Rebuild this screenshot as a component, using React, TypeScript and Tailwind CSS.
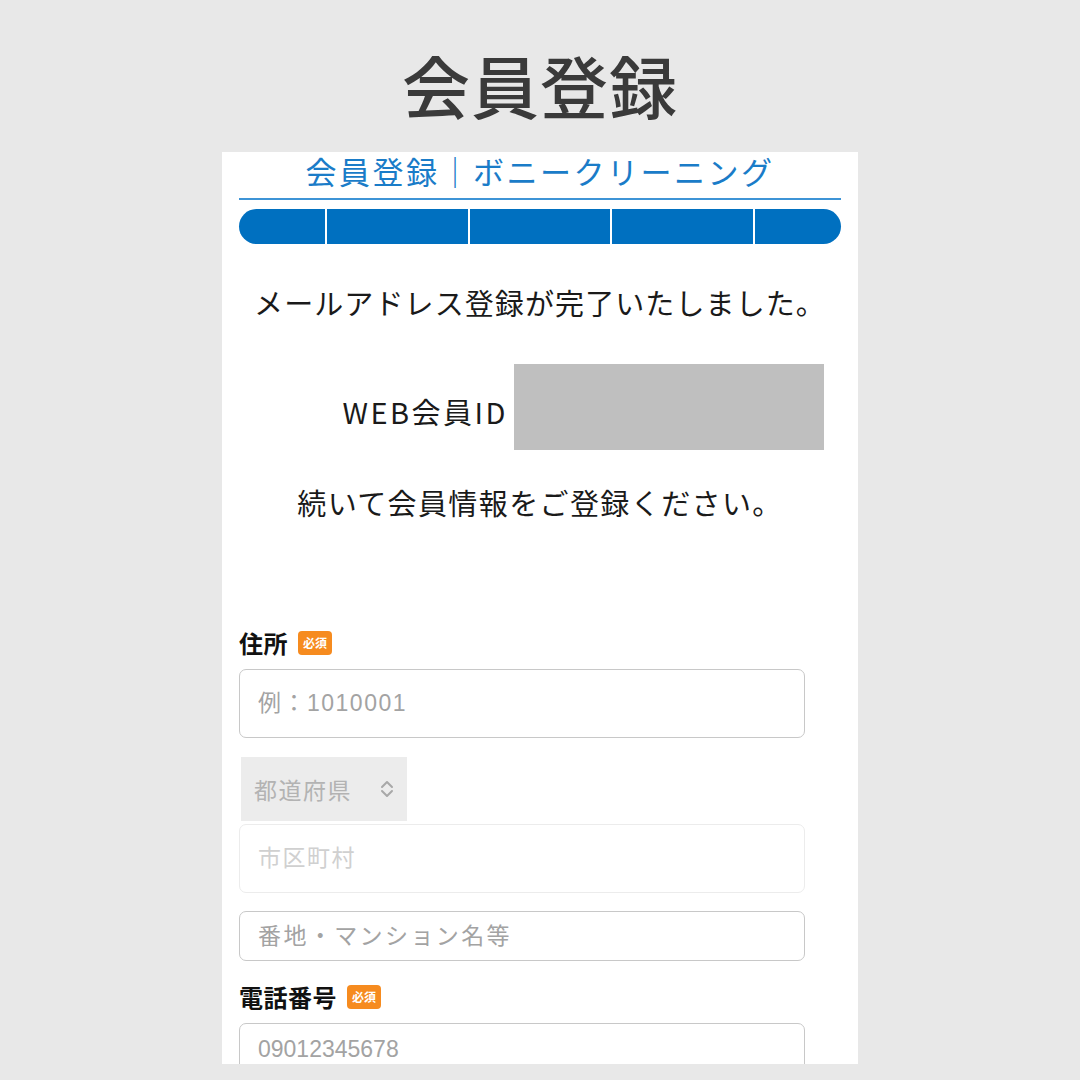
import React from 'react';

const FONT = '[font-family:"Noto_Sans_CJK_JP","Noto_Sans",sans-serif]';

const Required: React.FC = () => (
  <span className="inline-flex h-[24px] w-[34px] items-center justify-center rounded-[4px] bg-[#f68b1f] text-[12px] font-bold leading-none text-white">
    必須
  </span>
);

const FieldLabel: React.FC<{ text: string }> = ({ text }) => (
  <div className="flex h-[30px] items-center gap-[10px]">
    <span className="text-[24px] font-bold leading-[30px] tracking-[0.5px] text-[#111]">{text}</span>
    <Required />
  </div>
);

type InputProps = { placeholder: string; className?: string; disabled?: boolean; spaced?: boolean };

const TextBox: React.FC<InputProps> = ({ placeholder, className = '', disabled, spaced = true }) => (
  <input
    readOnly
    placeholder={placeholder}
    className={
      'block w-[566px] rounded-[7px] border-[1.5px] bg-white px-[18px] text-[23px] outline-none [font-family:"Liberation_Sans","Noto_Sans_CJK_JP",sans-serif] ' +
      (spaced ? 'tracking-[1.5px] ' : '') +
      (disabled
        ? 'border-[#ececec] placeholder:text-[#d0d0d0] '
        : 'border-[#c8c8c8] placeholder:text-[#a3a3a3] ') +
      className
    }
  />
);

const App: React.FC = () => {
  const steps = [86, 141, 140, 141, 86];

  return (
    <div className={`h-[1080px] w-[1080px] overflow-hidden bg-[#e8e8e8] ${FONT}`}>
      <div className="flex h-[152px] items-center justify-center pt-[18px]">
        <h1 className="text-[68px] font-medium leading-none tracking-[1px] text-[#3a3a3a]">会員登録</h1>
      </div>

      <div className="mx-auto flex h-[912px] w-[636px] flex-col bg-white">
        {/* site header */}
        <div className="h-[36px] pt-[2px] text-center text-[31px] leading-[34px] tracking-[2.5px] text-[#1a7cc8]">
          会員登録｜ボニークリーニング
        </div>

        <div className="min-h-0 flex-1 overflow-hidden">
          <div className="mx-[17px] mt-[10px] h-[2px] bg-[#3d94d6]" />

          {/* step bar */}
          <div className="mx-[17px] mt-[9px] flex h-[35px] gap-[2px]">
            {steps.map((w, i) => (
              <div
                key={i}
                style={{ width: w }}
                className={
                  'h-full bg-[#0070c0] ' +
                  (i === 0 ? 'rounded-l-full' : '') +
                  (i === steps.length - 1 ? 'rounded-r-full' : '')
                }
              />
            ))}
          </div>

          <p className="mt-[38px] text-center text-[29px] leading-[40px] tracking-[1.1px] text-[#1a1a1a]">
            メールアドレス登録が完了いたしました。
          </p>

          <div className="mt-[42px] flex items-center justify-end gap-[6px] pr-[34px]">
            <span className="pt-[8px] text-[29px] leading-[40px] tracking-[2.5px] text-[#1a1a1a]">WEB会員ID</span>
            <div className="h-[86px] w-[310px] bg-[#bfbfbf]" />
          </div>

          <p className="mt-[32px] text-center text-[29px] leading-[40px] tracking-[1.4px] text-[#1a1a1a]">
            続いて会員情報をご登録ください。
          </p>

          {/* form */}
          <div className="mt-[106px] pl-[17px]">
            <FieldLabel text="住所" />
            <TextBox placeholder="例：1010001" className="mt-[11px] h-[69px]" />

            <div className="ml-[2px] mt-[19px] flex h-[64px] w-[166px] items-center justify-between bg-[#ececec] pl-[13px] pr-[12px]">
              <span className="text-[23px] tracking-[1.5px] text-[#b3b3b3]">都道府県</span>
              <svg width="16" height="20" viewBox="0 0 16 20" fill="none" stroke="#a8a8a8" strokeWidth="2" strokeLinecap="round" strokeLinejoin="round">
                <path d="M3 8l5-5 5 5" />
                <path d="M3 12l5 5 5-5" />
              </svg>
            </div>

            <TextBox placeholder="市区町村" disabled className="mt-[3px] h-[69px]" />
            <TextBox placeholder="番地・マンション名等" className="mt-[18px] h-[50px] tracking-[2.4px]" />

            <div className="mt-[21px]">
              <FieldLabel text="電話番号" />
            </div>
            <TextBox placeholder="09012345678" spaced={false} className="mt-[11px] h-[52px]" />
          </div>
        </div>
      </div>
    </div>
  );
};

export default App;
